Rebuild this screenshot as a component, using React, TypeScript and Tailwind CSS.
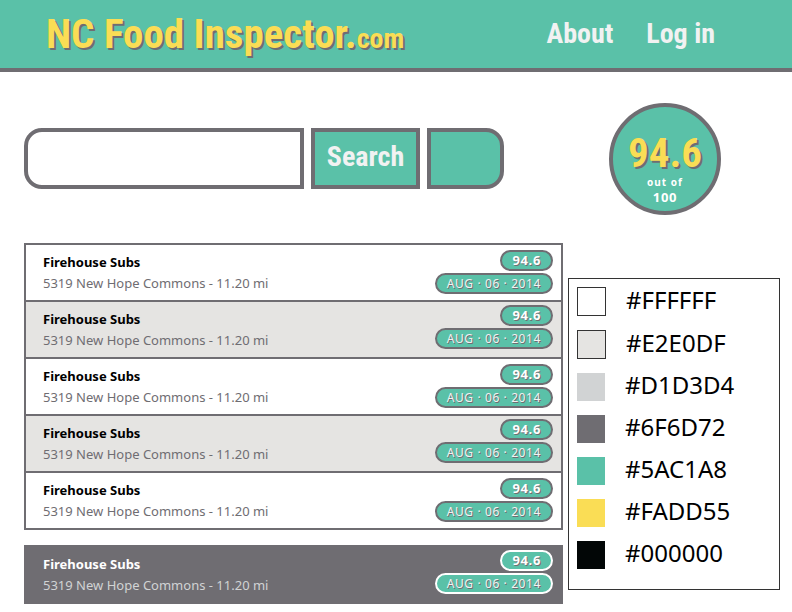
type Place = { id: number; name: string; address: string; score: string; date: string };

const places: Place[] = [1, 2, 3, 4, 5].map((id) => ({
  id,
  name: "Firehouse Subs",
  address: "5319 New Hope Commons - 11.20 mi",
  score: "94.6",
  date: "AUG · 06 · 2014",
}));

const palette = [
  { hex: "#FFFFFF", swatch: "size-[29px] border border-[#333333] bg-white" },
  { hex: "#E2E0DF", swatch: "size-[29px] border border-[#333333] bg-[#e5e4e2]" },
  { hex: "#D1D3D4", swatch: "size-7 bg-[#d1d3d4]" },
  { hex: "#6F6D72", swatch: "size-7 bg-[#6f6d72]" },
  { hex: "#5AC1A8", swatch: "size-7 bg-[#5ac1a8]" },
  { hex: "#FADD55", swatch: "size-7 bg-[#fadd55]" },
  { hex: "#000000", swatch: "size-7 bg-[#020606]" },
];

const display = "font-['Roboto_Condensed','Roboto',sans-serif] font-bold";
const raised = "[text-shadow:2px_2px_0_#6f6d72]";

function PlaceRow({ place, selected = false }: { place: Place; selected?: boolean }) {
  const badge = `flex h-[21px] items-center rounded-full border-2 bg-[#5ac1a8] px-[10px] tracking-wider [text-shadow:1px_1px_0_#6f6d72] ${
    selected ? "border-white" : "border-[#6f6d72]"
  }`;
  const lifted = selected || place.id % 2 === 0;
  return (
    <div className="flex min-h-[55px] justify-between pr-2 pl-[17px]">
      <div className="pt-[7px] text-[13px] leading-[21px]">
        <h2 className={`font-bold ${selected ? "text-white" : "text-black"}`}>{place.name}</h2>
        <p className={selected ? "text-[#d1d3d4]" : "text-[#6f6d72]"}>{place.address}</p>
      </div>
      <div className={`flex flex-col items-end gap-[2px] ${lifted ? "pt-[3px]" : "pt-[5px]"}`}>
        <span className={`${badge} text-[13px] font-bold text-white`}>{place.score}</span>
        <time dateTime="2014-08-06" className={`${badge} text-[12px] text-[#f1f2f2]`}>
          {place.date}
        </time>
      </div>
    </div>
  );
}

export default function App() {
  return (
    <div className="min-h-screen bg-white font-['Noto_Sans',sans-serif]">
      <header className="flex h-[72px] items-center justify-between border-b-4 border-[#6f6d72] bg-[#5ac1a8] pr-[77px] pl-[46px]">
        <h1 className={`${display} ${raised} text-[41px] leading-none text-[#fadd55]`}>
          NC Food Inspector.<span className="text-[28px]">com</span>
        </h1>
        <nav className={`${display} flex gap-[33px] text-[28px] text-[#f1f2f2]`}>
          <a href="#about">About</a>
          <a href="#login">Log in</a>
        </nav>
      </header>

      <main className="grid grid-cols-[minmax(0,1fr)_212px] gap-x-[5px] pr-3 pl-6">
        <form className="mt-14 flex h-[61px] gap-[7px] pr-[59px]" onSubmit={(e) => e.preventDefault()}>
          <input
            type="text"
            aria-label="Search restaurants"
            className="min-w-0 flex-1 rounded-l-[18px] border-4 border-[#6f6d72] px-3 text-lg outline-none"
          />
          <button
            type="submit"
            className={`${display} w-[109px] border-4 border-[#6f6d72] bg-[#5ac1a8] pb-1 text-[28px] text-[#f1f2f2]`}
          >
            Search
          </button>
          <button
            type="button"
            aria-label="Use my location"
            className="w-[77px] rounded-r-[18px] border-4 border-[#6f6d72] bg-[#5ac1a8]"
          />
        </form>
        <div className="mt-[31px] ml-[41px] flex size-28 flex-col items-center rounded-full border-4 border-[#6f6d72] bg-[#5ac1a8] pt-[22px] font-bold text-white">
          <span className={`${display} ${raised} text-[41px] leading-[48px] text-[#fadd55]`}>94.6</span>
          <span className="text-[10px] leading-[10px] tracking-widest">out of</span>
          <span className="text-[13px] leading-5 tracking-wider">100</span>
        </div>

        <section aria-label="Results" className="mt-7">
          <ul className="divide-y-2 divide-[#6f6d72] border-2 border-[#6f6d72]">
            {places.map((place) => (
              <li key={place.id} className="even:bg-[#e5e4e2]">
                <PlaceRow place={place} />
              </li>
            ))}
          </ul>
          <article className="mt-[15px] border-2 border-[#6f6d72] bg-[#6f6d72]">
            <PlaceRow place={{ ...places[0], id: 6 }} selected />
          </article>
        </section>

        <ul aria-label="Colour palette" className="mt-[63px] flex flex-col gap-[14px] self-start border border-[#333333] px-2 pt-2 pb-5">
          {palette.map(({ hex, swatch }) => (
            <li key={hex} className="flex items-center text-[24px] leading-7 text-black">
              <span className={swatch} />
              <span className="ml-5 -mt-1">{hex}</span>
            </li>
          ))}
        </ul>
      </main>
    </div>
  );
}
